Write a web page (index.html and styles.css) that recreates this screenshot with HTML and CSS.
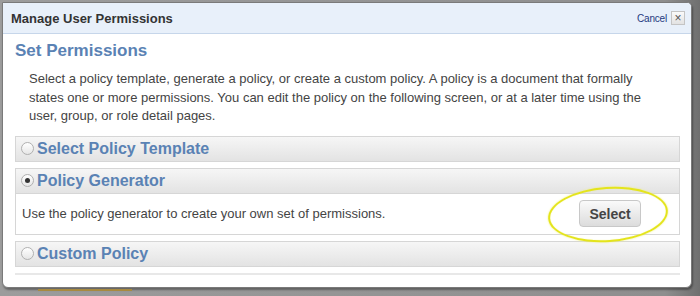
FILE: index.html
```html
<!DOCTYPE html>
<html lang="en">
<head>
  <meta charset="UTF-8">
  <title>Manage User Permissions</title>
  <link rel="stylesheet" href="styles.css">
</head>
<body>
  <div class="dialog">
    <div class="dialog-header">
      <span class="dialog-title">Manage User Permissions</span>
      <span class="cancel">Cancel <span class="close-box">&times;</span></span>
    </div>

    <div class="dialog-body">
      <h2>Set Permissions</h2>
      <p class="intro">
        Select a policy template, generate a policy, or create a custom policy. A policy is a document that formally<br>
        states one or more permissions. You can edit the policy on the following screen, or at a later time using the<br>
        user, group, or role detail pages.
      </p>

      <div class="option">
        <div class="option-head"><span class="radio"></span>Select Policy Template</div>
      </div>

      <div class="option">
        <div class="option-head"><span class="radio checked"></span>Policy Generator</div>
        <div class="option-body">
          <span>Use the policy generator to create your own set of permissions.</span>
          <button class="select-btn">Select</button>
          <div class="highlight"></div>
        </div>
      </div>

      <div class="option">
        <div class="option-head"><span class="radio"></span>Custom Policy</div>
      </div>

      <div class="divider"></div>
    </div>
  </div>
  <div class="under-bar"></div>
</body>
</html>
```

FILE: styles.css
```css
body {
  margin: 0;
  padding: 2px 8px 0 2px;
  background: linear-gradient(to right, #9c9c9c, #8e8e8e 95%, #6f6f6f);
  font-family: "Liberation Sans", Arial, sans-serif;
  height: 296px;
  box-sizing: border-box;
  overflow: hidden;
}

.dialog {
  width: 688px;
  height: 284px;
  background: white;
  border: 1px solid #7a7a7a;
  border-radius: 0 5px 6px 6px;
  box-shadow: 1px 2px 2px rgba(0, 0, 0, 0.35);
  overflow: hidden;
}

.dialog-header {
  display: flex;
  justify-content: space-between;
  align-items: center;
  height: 30px;
  padding: 0 6px 0 8px;
  background-color: #e8f0fa;
  border-bottom: 1px solid #c6d6ea;
}

.dialog-title {
  font-size: 13px;
  font-weight: bold;
  color: #333;
}

.cancel {
  display: flex;
  align-items: center;
  gap: 4px;
  font-size: 10px;
  color: #253a80;
  letter-spacing: -0.2px;
}

.close-box {
  display: inline-flex;
  justify-content: center;
  align-items: center;
  width: 12px;
  height: 12px;
  border: 1px solid #c4c4c4;
  background: linear-gradient(#fafafa, #e2e2e2);
  color: #555;
  font-size: 12px;
  line-height: 1;
}

.dialog-body {
  padding: 0 11px 0 12px;
}

h2 {
  margin: 7px 0 0 0;
  font-size: 17px;
  line-height: 20px;
  color: #5a82b4;
}

.intro {
  margin: 9px 0 10px 0;
  padding-left: 14px;
  font-size: 13px;
  line-height: 18.5px;
  color: #444;
}

.option {
  margin-bottom: 6px;
  border: 1px solid #d6d6d6;
}

.option-head {
  display: flex;
  align-items: center;
  height: 24px;
  padding-left: 5px;
  background: linear-gradient(#f6f6f6, #e3e3e3);
  font-size: 16px;
  font-weight: bold;
  color: #5a82b4;
}

.radio {
  width: 11px;
  height: 11px;
  margin-right: 3px;
  border: 1px solid #b0b0b0;
  border-radius: 50%;
  background: linear-gradient(#ffffff, #e6e6e6);
  position: relative;
}

.radio.checked::after {
  content: "";
  position: absolute;
  left: 3px;
  top: 3px;
  width: 5px;
  height: 5px;
  border-radius: 50%;
  background: #333;
}

.option-body {
  position: relative;
  display: flex;
  justify-content: space-between;
  align-items: center;
  height: 40px;
  padding: 0 38px 0 6px;
  border-top: 1px solid #d6d6d6;
  background: white;
  font-size: 13px;
  color: #444;
}

.select-btn {
  width: 62px;
  height: 27px;
  border: 1px solid #c8c8c8;
  border-radius: 4px;
  background: linear-gradient(#fafafa, #dcdcdc);
  font-family: "Liberation Sans", Arial, sans-serif;
  font-size: 14px;
  font-weight: bold;
  color: #444;
}

.highlight {
  position: absolute;
  left: 532px;
  top: -7px;
  width: 116px;
  height: 51px;
  border: 2px solid #e4e41c;
  border-radius: 50%;
  box-shadow: 0 0 2px #f0f070, inset 0 0 1px #f0f070;
  transform: rotate(-4deg);
}

.divider {
  height: 2px;
  margin-top: 5px;
  background: #e8e8e8;
}

.under-bar {
  width: 94px;
  height: 2px;
  margin: 1px 0 0 36px;
  background: #a88a40;
}
```
